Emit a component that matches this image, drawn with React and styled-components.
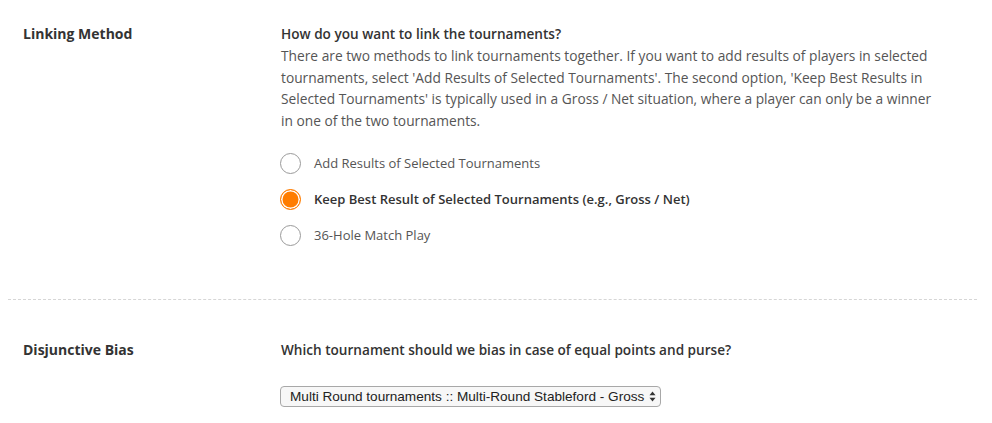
import React, { useState } from "react";
import { styled, createGlobalStyle } from "styled-components";

const GlobalStyle = createGlobalStyle`
  body {
    margin: 0;
    background: #fff;
    font-family: "Open Sans", "Liberation Sans", sans-serif;
    color: #333;
  }
`;

const options = [
  "Add Results of Selected Tournaments",
  "Keep Best Result of Selected Tournaments (e.g., Gross / Net)",
  "36-Hole Match Play",
];

const App = () => {
  const [selected, setSelected] = useState(1);

  return (
    <Page>
      <GlobalStyle />
      <Section $pad="24px 0 53px">
        <Label>Linking Method</Label>
        <Body>
          <Question>How do you want to link the tournaments?</Question>
          <Description>
            There are two methods to link tournaments together. If you want to
            add results of players in selected tournaments, select 'Add Results
            of Selected Tournaments'. The second option, 'Keep Best Results in
            Selected Tournaments' is typically used in a Gross / Net situation,
            where a player can only be a winner in one of the two tournaments.
          </Description>
          <RadioList>
            {options.map((opt, i) => (
              <RadioRow key={opt} onClick={() => setSelected(i)}>
                <Radio $checked={selected === i} />
                <RadioText $checked={selected === i}>{opt}</RadioText>
              </RadioRow>
            ))}
          </RadioList>
        </Body>
      </Section>
      <Divider />
      <Section $pad="40px 0 20px">
        <Label>Disjunctive Bias</Label>
        <Body>
          <Question>
            Which tournament should we bias in case of equal points and purse?
          </Question>
          <SelectBox>
            <span>Multi Round tournaments :: Multi-Round Stableford - Gross</span>
            <svg width="7" height="11" viewBox="0 0 7 11">
              <path d="M3.5 0.5 L6.5 4.2 L0.5 4.2 Z" fill="#333" />
              <path d="M3.5 10.5 L6.5 6.8 L0.5 6.8 Z" fill="#333" />
            </svg>
          </SelectBox>
        </Body>
      </Section>
    </Page>
  );
};

export default App;

const Page = styled.div`
  margin: 0 15px 0 8px;
`;

const Section = styled.div`
  display: grid;
  grid-template-columns: 258px 1fr;
  padding: ${(p) => p.$pad};
  padding-left: 15px;
`;

const Label = styled.div`
  font-weight: 700;
  font-size: 14px;
  line-height: 20px;
  color: #333;
`;

const Body = styled.div`
  display: flex;
  flex-direction: column;
`;

const Question = styled.div`
  font-weight: 600;
  font-size: 13.6px;
  line-height: 20px;
  color: #333;
`;

const Description = styled.p`
  margin: 1px 0 0;
  font-size: 13.75px;
  line-height: 21.5px;
  color: #555;
  max-width: 665px;
`;

const RadioList = styled.div`
  display: flex;
  flex-direction: column;
  gap: 14px;
  margin-top: 21px;
`;

const RadioRow = styled.label`
  display: flex;
  align-items: center;
  gap: 13px;
  cursor: pointer;
`;

const Radio = styled.span`
  box-sizing: border-box;
  width: 21px;
  height: 21px;
  margin-left: -1px;
  border-radius: 50%;
  border: 1px solid ${(p) => (p.$checked ? "#ff7d00" : "#9a9a9a")};
  background: ${(p) => (p.$checked ? "#ff7d00" : "#fff")};
  box-shadow: ${(p) => (p.$checked ? "inset 0 0 0 1.5px #fff" : "none")};
`;

const RadioText = styled.span`
  font-size: 13px;
  line-height: 22px;
  font-weight: ${(p) => (p.$checked ? 600 : 400)};
  color: ${(p) => (p.$checked ? "#333" : "#555")};
`;

const Divider = styled.hr`
  margin: 0;
  border: none;
  border-top: 1px dashed #d6d6d6;
`;

const SelectBox = styled.div`
  margin-top: 26px;
  align-self: flex-start;
  box-sizing: border-box;
  height: 21px;
  display: flex;
  align-items: center;
  gap: 5px;
  padding: 0 4px 0 9px;
  margin-left: -1px;
  border: 1px solid #a8a8a8;
  border-radius: 4px;
  background: #f7f7f7;
  font-family: "Liberation Sans", Arial, sans-serif;
  font-size: 13.6px;
  color: #222;
`;
